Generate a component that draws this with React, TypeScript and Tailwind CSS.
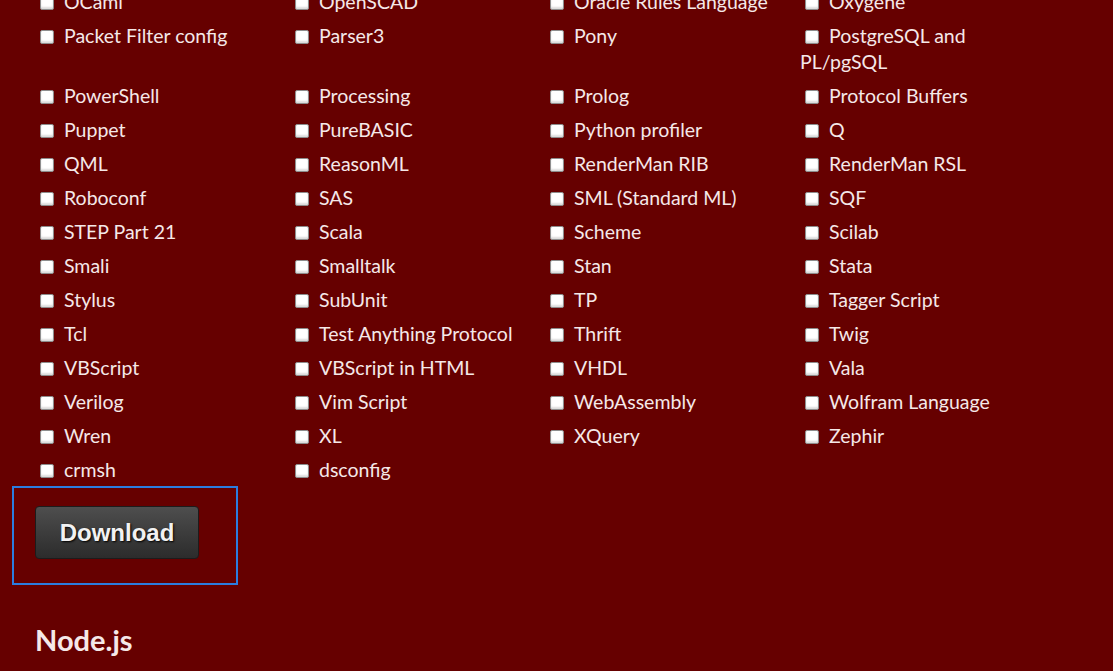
import React from "react";

const languages = [
    "OCaml", "OpenSCAD", "Oracle Rules Language", "Oxygene",
    "Packet Filter config", "Parser3", "Pony", "PostgreSQL and PL/pgSQL",
    "PowerShell", "Processing", "Prolog", "Protocol Buffers",
    "Puppet", "PureBASIC", "Python profiler", "Q",
    "QML", "ReasonML", "RenderMan RIB", "RenderMan RSL",
    "Roboconf", "SAS", "SML (Standard ML)", "SQF",
    "STEP Part 21", "Scala", "Scheme", "Scilab",
    "Smali", "Smalltalk", "Stan", "Stata",
    "Stylus", "SubUnit", "TP", "Tagger Script",
    "Tcl", "Test Anything Protocol", "Thrift", "Twig",
    "VBScript", "VBScript in HTML", "VHDL", "Vala",
    "Verilog", "Vim Script", "WebAssembly", "Wolfram Language",
    "Wren", "XL", "XQuery", "Zephir",
    "crmsh", "dsconfig",
]

export default function App() {
    return (
        <div className="min-h-[671px] bg-[#660000] text-[#f5e8e8] font-['Lato',sans-serif] px-[35px] overflow-hidden">
            <div className="grid grid-cols-[repeat(4,240px)] gap-x-[15px] mt-[-11px]">
                {languages.map((lang) => (
                    <label key={lang} className="block text-[19.5px] leading-[26px] mb-[8px]">
                        <input type="checkbox"
                               className="appearance-none inline-block w-[14px] h-[14px] ml-[5px] mr-[10px] align-[-1px] bg-white border border-[#8d8d8d] rounded-[2px] shadow-[inset_0_-2px_2px_#dcdcdc]"/>
                        {lang}
                    </label>
                ))}
            </div>
            <div className="ml-[-23px] mt-[-5px] w-[226px] border-2 border-[#2b7de0] pt-[18px] pb-[24px] pl-[21px]">
                <button
                    className="w-[164px] h-[53px] rounded-[4px] border border-[#1c1c1c] bg-gradient-to-b from-[#4e4e4e] to-[#2c2c2c] text-[#f2f2f2] font-['Liberation_Sans',Arial,sans-serif] font-bold text-[24px] [text-shadow:1px_1px_2px_#000]">
                    Download
                </button>
            </div>
            <h2 className="mt-[39px] text-[29px] font-bold leading-[32px]">Node.js</h2>
        </div>
    )
}
